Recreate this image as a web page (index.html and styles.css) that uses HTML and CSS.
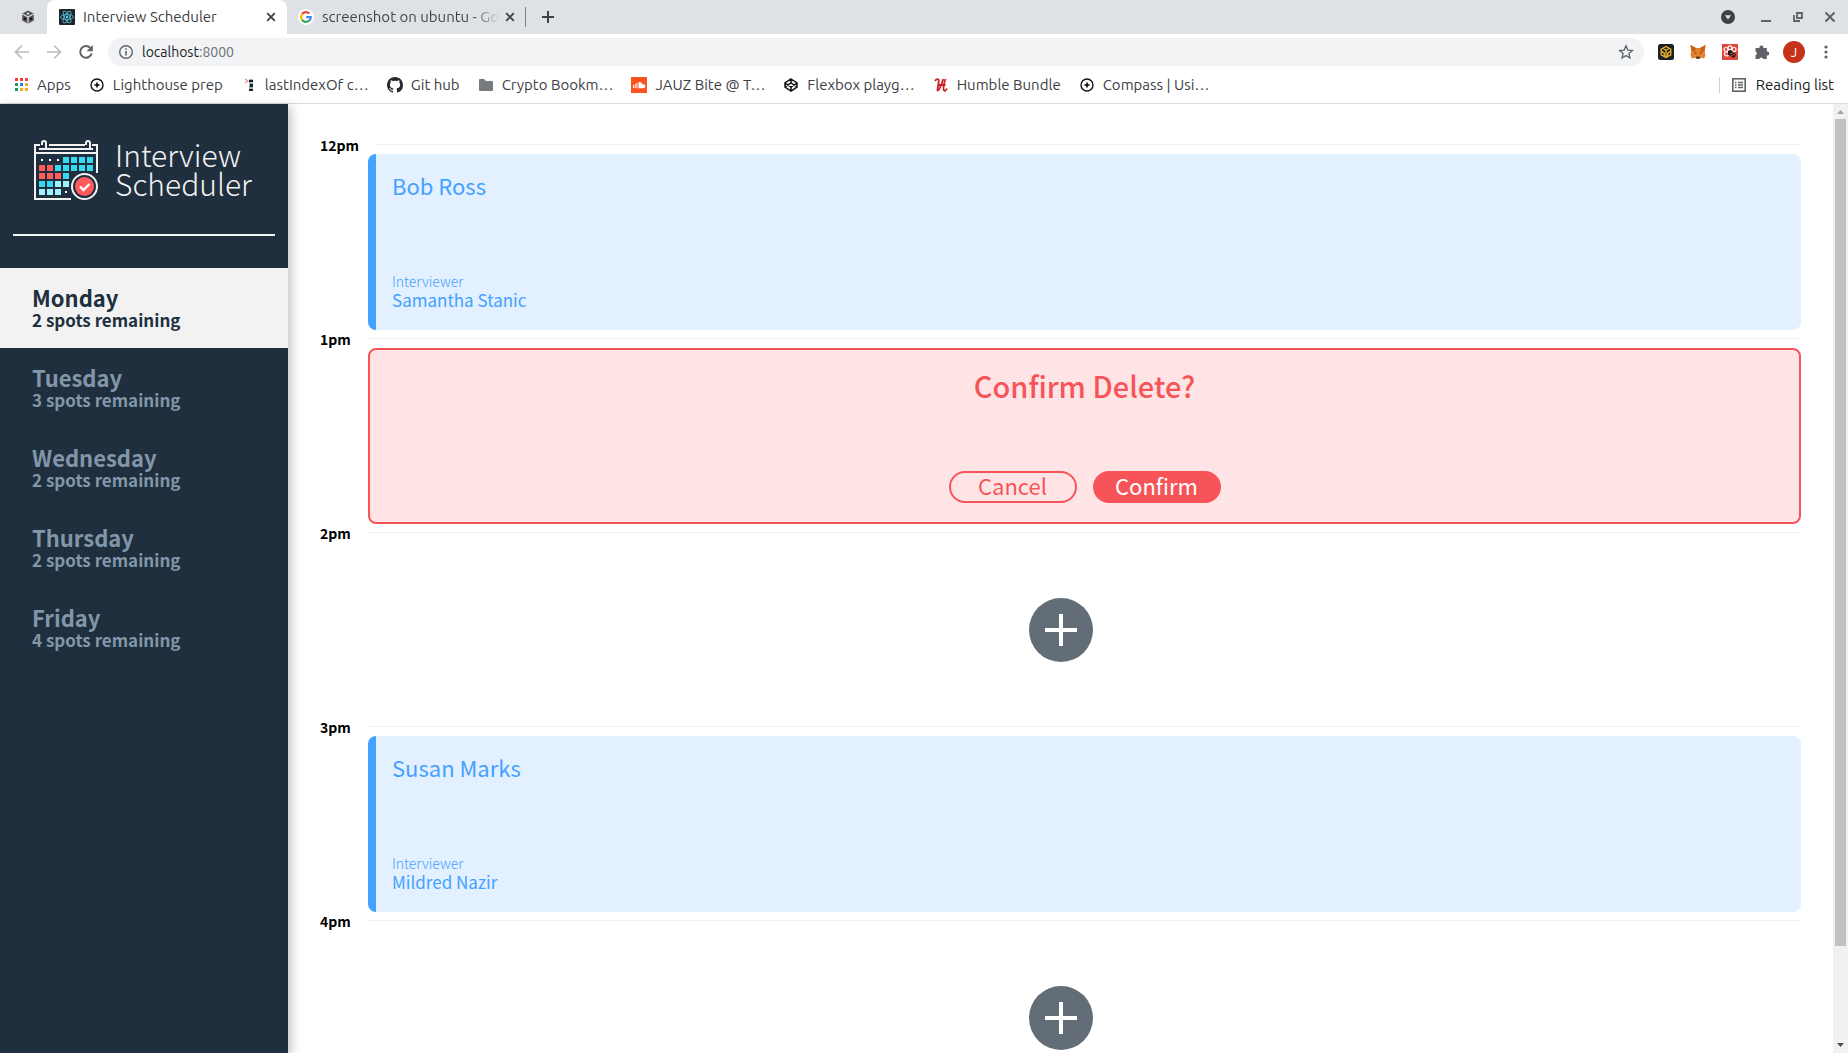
FILE: index.html
```html
<!DOCTYPE html>
<html lang="en">
<head>
<meta charset="utf-8">
<title>Interview Scheduler</title>
<link rel="stylesheet" href="styles.css">
</head>
<body>
<svg class="defs" aria-hidden="true">
  <symbol id="i-close" viewBox="0 0 16 16"><path d="M4.200 4.200l7.600 7.600M11.800 4.200l-7.600 7.600" stroke="#3c4043" stroke-width="1.800"/></symbol>
  <symbol id="i-compass" viewBox="0 0 16 16"><circle cx="8" cy="8" r="6" fill="none" stroke="#111" stroke-width="1.400"/><path d="M8 4.500l1 2.500 2.500 1L9 9l-1 2.500L7 9 4.500 8 7 7z" fill="#111"/></symbol>
</svg>

<header class="browser">
  <div class="tabs">
    <div class="pinned">
      <svg class="icon" viewBox="0 0 16 16"><path d="M8 1.500l5.800 3v7L8 14.800l-5.800-3.300v-7z" fill="#555"/><path d="M8 8v6.500M8 8L2.500 5M8 8l5.500-3" stroke="#ddd" stroke-width="1.200"/><circle cx="8" cy="4.600" r="1.200" fill="#ddd"/><circle cx="5" cy="9.800" r="1.200" fill="#111"/><circle cx="11" cy="9.800" r="1.200" fill="#111"/></svg>
    </div>
    <div class="tab tab--active">
      <svg class="icon" viewBox="0 0 16 16"><rect width="16" height="16" rx="1" fill="#20232a"/><g fill="none" stroke="#4fb8d2" stroke-width=".9"><ellipse cx="8" cy="8" rx="6.500" ry="2.500"/><ellipse cx="8" cy="8" rx="6.500" ry="2.500" transform="rotate(60 8 8)"/><ellipse cx="8" cy="8" rx="6.500" ry="2.500" transform="rotate(120 8 8)"/></g><circle cx="8" cy="8" r="1.200" fill="#61dafb"/></svg>
      <span class="tab__title">Interview Scheduler</span>
      <button class="icon-button" aria-label="Close tab"><svg class="icon"><use href="#i-close"/></svg></button>
    </div>
    <div class="tab tab--second">
      <svg class="icon" viewBox="0 0 16 16"><circle cx="8" cy="8" r="8" fill="#fff"/><g fill="none" stroke-width="2.200"><path d="M4 5.200A4.900 4.900 0 0 1 11.400 4.500" stroke="#ea4335"/><path d="M4 5.200a4.900 4.900 0 0 0 0 5.600" stroke="#fbbc05"/><path d="M4 10.800a4.900 4.900 0 0 0 7.200.9" stroke="#34a853"/><path d="M11.200 11.700A4.900 4.900 0 0 0 12.800 8.200H8.200" stroke="#4285f4"/></g></svg>
      <span class="tab__title tab__title--fade">screenshot on ubuntu - Go</span>
      <button class="icon-button" aria-label="Close tab"><svg class="icon"><use href="#i-close"/></svg></button>
    </div>
    <button class="icon-button new-tab" aria-label="New tab"><svg class="icon" viewBox="0 0 16 16"><path d="M8 2v12M2 8h12" stroke="#3c4043" stroke-width="2"/></svg></button>
    <div class="window-controls">
      <button class="icon-button" aria-label="Search tabs"><svg class="icon" viewBox="0 0 16 16"><circle cx="8" cy="8" r="7" fill="#3c4043"/><path d="M4.800 6.200h6.400L8 10.400z" fill="#dee1e6"/></svg></button>
      <button class="icon-button" aria-label="Minimize"><svg class="icon" viewBox="0 0 16 16"><path d="M3 12h10" stroke="#5f6368" stroke-width="2"/></svg></button>
      <button class="icon-button" aria-label="Restore"><svg class="icon" viewBox="0 0 16 16"><path d="M7 4h5v5H7zM4 6v6h6" fill="none" stroke="#5f6368" stroke-width="1.800"/></svg></button>
      <button class="icon-button" aria-label="Close window"><svg class="icon" viewBox="0 0 16 16"><path d="M3.500 3.500l9 9M12.500 3.500l-9 9" stroke="#5f6368" stroke-width="2"/></svg></button>
    </div>
  </div>

  <div class="toolbar">
    <button class="icon-button" aria-label="Back"><svg class="icon" viewBox="0 0 16 16"><path d="M15 8H2M8 1.500L1.500 8 8 14.500" fill="none" stroke="#babcbe" stroke-width="1.700"/></svg></button>
    <button class="icon-button" aria-label="Forward"><svg class="icon" viewBox="0 0 16 16"><path d="M1 8h13M8 1.500L14.500 8 8 14.500" fill="none" stroke="#babcbe" stroke-width="1.700"/></svg></button>
    <button class="icon-button" aria-label="Reload"><svg class="icon" viewBox="0 0 16 16"><path d="M13.600 9.500A5.800 5.800 0 1 1 12.300 4" fill="none" stroke="#5f6368" stroke-width="2"/><path d="M14.800 1v6.200H8.600z" fill="#5f6368"/></svg></button>
    <div class="omnibox">
      <svg class="icon" viewBox="0 0 16 16"><circle cx="8" cy="8" r="6.300" fill="none" stroke="#5f6368" stroke-width="1.400"/><path d="M8 7v4.500M8 4.200v1.600" stroke="#5f6368" stroke-width="1.600"/></svg>
      <span class="omnibox__url">localhost<span class="omnibox__port">:8000</span></span>
      <button class="icon-button" aria-label="Bookmark this page"><svg class="icon" viewBox="0 0 16 16"><path d="M8 1.800l1.800 4.300 4.600.4-3.500 3 1.100 4.500L8 11.600 4 14l1.100-4.500-3.500-3 4.600-.4z" fill="none" stroke="#5f6368" stroke-width="1.300"/></svg></button>
    </div>
    <button class="icon-button" aria-label="Wallet extension"><svg class="icon" viewBox="0 0 16 16"><rect width="16" height="16" rx="2.500" fill="#1b1f26"/><path d="M8 2.500l4.800 2.700v5.600L8 13.500l-4.800-2.700V5.200zM5 4.300l3 1.900 3-1.900M3.500 7.300l2.800 1.900v3M12.500 7.300L9.700 9.200v3M8 6.200v7" fill="none" stroke="#f0b429" stroke-width="1.300"/></svg></button>
    <button class="icon-button" aria-label="Fox extension"><svg class="icon" viewBox="0 0 16 16"><path d="M.5 1l5.500 3h4l5.500-3-.9 6 .9 4-1.300 3.500-3.400-.8L9.500 15h-3l-1.300-1.300-3.400.8L.5 11l.9-4z" fill="#e8812d"/><path d="M.5 1L6 4 4.500 8 1.400 7zM15.500 1L10 4l1.500 4 3.100-1z" fill="#cd6116"/><path d="M4 8l2.500 1-.6 1zM12 8l-2.500 1 .6 1z" fill="#40352d"/><path d="M6.500 12.500h3l.5 2H6z" fill="#333"/></svg></button>
    <button class="icon-button" aria-label="Flower extension"><svg class="icon" viewBox="0 0 16 16"><rect width="16" height="16" fill="#e0483e"/><g fill="none" stroke="#fff" stroke-width="1.200"><circle cx="8" cy="3.800" r="2"/><circle cx="4" cy="5.500" r="2"/><circle cx="12" cy="5.500" r="2"/><circle cx="4.500" cy="10" r="2"/></g><path d="M6 7l3-1 2 2 3 2-1 3-2 1-2-2-3-1z" fill="#1b1b1b"/><path d="M8 10l4-2M9 12l4-2" stroke="#e0483e"/></svg></button>
    <button class="icon-button" aria-label="Extensions"><svg class="icon" viewBox="0 0 16 16"><path d="M1.500 4h4a2 2 0 1 1 3.800 0h3.500v3.600a2 2 0 1 1 0 3.900V15H9.200a2 2 0 0 0-3.900 0H1.500v-3.700a2 2 0 0 0 0-3.800z" fill="#5f6368"/></svg></button>
    <button class="avatar" aria-label="Profile">J</button>
    <button class="icon-button" aria-label="Menu"><svg class="icon" viewBox="0 0 16 16"><g fill="#5f6368"><circle cx="8" cy="3" r="1.600"/><circle cx="8" cy="8" r="1.600"/><circle cx="8" cy="13" r="1.600"/></g></svg></button>
  </div>

  <nav class="bookmarks" aria-label="Bookmarks">
    <a href="#"><svg class="icon" viewBox="0 0 16 16"><path d="M2 1h3v3H2zM7 1h3v3H7zM12 1h3v3h-3z" fill="#ea4335"/><path d="M2 6h3v3H2zM2 11h3v3H2z" fill="#1a9f57"/><path d="M7 6h3v3H7z" fill="#1a83f4"/><path d="M12 6h3v3h-3zM7 11h3v3H7zM12 11h3v3h-3z" fill="#fba922"/></svg>Apps</a>
    <a href="#"><svg class="icon"><use href="#i-compass"/></svg>Lighthouse prep</a>
    <a href="#"><svg class="icon" viewBox="0 0 16 16"><path d="M4 2l3 2-3 2" fill="none" stroke="#f78a8a" stroke-width="1.200"/><path d="M8 2h4v12H8z" fill="#9fb4bb"/><path d="M8 3h4v2H8zM9 7h3v3H9zM8 12h4v2H8z" fill="#1b1f26"/></svg>lastIndexOf c…</a>
    <a href="#"><svg class="icon" viewBox="0 0 16 16"><path fill="#24292f" d="M8 0C3.580 0 0 3.580 0 8c0 3.540 2.290 6.530 5.470 7.590.4.070.55-.17.55-.38 0-.19-.01-.82-.01-1.490-2.010.37-2.530-.49-2.690-.94-.09-.23-.48-.94-.82-1.130-.28-.15-.68-.52-.01-.53.63-.01 1.080.58 1.230.82.72 1.210 1.870.87 2.330.66.070-.52.28-.87.51-1.070-1.780-.2-3.640-.89-3.640-3.950 0-.87.31-1.590.82-2.150-.08-.2-.36-1.020.080-2.120 0 0 .67-.21 2.200.82.64-.18 1.320-.27 2-.27s1.360.090 2 .27c1.530-1.040 2.200-.82 2.200-.82.44 1.100.16 1.920.080 2.120.51.56.82 1.270.82 2.150 0 3.070-1.870 3.750-3.650 3.950.29.25.54.73.54 1.480 0 1.070-.01 1.930-.01 2.200 0 .21.15.46.55.38A8.010 8.010 0 0 0 16 8c0-4.420-3.580-8-8-8z"/></svg>Git hub</a>
    <a href="#"><svg class="icon" viewBox="0 0 16 16"><path d="M1 3a1 1 0 0 1 1-1h4l2 2h6a1 1 0 0 1 1 1v8a1 1 0 0 1-1 1H2a1 1 0 0 1-1-1z" fill="#777b7f"/></svg>Crypto Bookm…</a>
    <a href="#"><svg class="icon" viewBox="0 0 16 16"><rect width="16" height="16" fill="#fb5320"/><path d="M7.500 5.200a3 3 0 0 1 4 2.200 2 2 0 1 1 .6 3.800H7.500z" fill="#fff"/><path d="M2.500 8v3M4.200 7v4.200M5.900 6v5.200" stroke="#fff"/></svg>JAUZ Bite @ T…</a>
    <a href="#"><svg class="icon" viewBox="0 0 16 16"><path d="M8 2l6 4v4l-6 4-6-4V6zM2 6l6 4 6-4M2 10l6-4 6 4M8 2v4M8 10v4" fill="none" stroke="#111" stroke-width="1.500"/></svg>Flexbox playg…</a>
    <a href="#"><svg class="icon" viewBox="0 0 16 16"><path d="M2 4C3.500 1.500 6 1.500 5.800 4L4.300 14M4.300 13.500c2.500.5 3.700-6 6-11.500M4.500 8h8M12.500 2c-1.500 4-2.300 8-1.800 11 .5 1.500 2.500.5 3.300-1.500" fill="none" stroke="#cb2229" stroke-width="1.800"/></svg>Humble Bundle</a>
    <a href="#"><svg class="icon"><use href="#i-compass"/></svg>Compass | Usi…</a>
    <a class="reading-list" href="#"><svg class="icon" viewBox="0 0 16 16"><rect x="1.800" y="1.800" width="12.400" height="12.400" fill="none" stroke="#5f6368" stroke-width="1.600"/><path d="M4 5.500h1.500M7 5.500h5M4 8h1.500M7 8h5M4 10.500h1.500M7 10.500h5" stroke="#5f6368" stroke-width="1.400"/></svg>Reading list</a>
  </nav>
</header>

<div class="page">
  <section class="sidebar">
    <div class="brand">
      <svg class="brand__logo" viewBox="0 0 76 72" aria-hidden="true">
        <g fill="none" stroke="#f2f2f2" stroke-width="2">
          <path d="M12 11H7v54h36M21 11h36M64 11h5v28M11 15h54M6 19h64"/>
          <path d="M14 11V9a2 2 0 0 1 4 0v6M58 11V9a2 2 0 0 1 4 0v6"/>
          <circle cx="56.500" cy="52.500" r="12.500"/>
        </g>
        <path d="M13 25h2v2h-2zM21 25h2v2h-2zM29 25h2v2h-2zM37 57h2v2h-2z" fill="#fff"/>
        <path d="M35 23h6v6h-6zM43 23h6v6h-6zM51 23h6v6h-6zM59 23h6v6h-6zM27 31h6v6h-6zM35 31h6v6h-6zM43 31h6v6h-6zM51 31h6v6h-6zM59 31h6v6h-6zM35 39h6v6h-6zM11 47h6v6h-6zM19 47h6v6h-6z" fill="#37d9f1"/>
        <path d="M11 31h6v6h-6zM19 31h6v6h-6zM11 39h6v6h-6zM19 39h6v6h-6zM27 39h6v6h-6z" fill="#ff5b5d"/>
        <path d="M27 47h6v6h-6zM35 47h6v6h-6zM11 55h6v6h-6zM19 55h6v6h-6zM27 55h6v6h-6z" fill="#9ff1fd"/>
        <circle cx="56.500" cy="52.500" r="9.500" fill="#ff5b5d"/>
        <path d="M52 52.500l3.500 3.500 6-6" fill="none" stroke="#fff" stroke-width="2.400"/>
      </svg>
      <h1 class="brand__name">Interview<br>Scheduler</h1>
    </div>
    <hr class="separator">
    <nav>
      <ul class="days">
        <li><a class="day day--selected" href="#"><span class="day__name">Monday</span><span class="day__spots">2 spots remaining</span></a></li>
        <li><a class="day" href="#"><span class="day__name">Tuesday</span><span class="day__spots">3 spots remaining</span></a></li>
        <li><a class="day" href="#"><span class="day__name">Wednesday</span><span class="day__spots">2 spots remaining</span></a></li>
        <li><a class="day" href="#"><span class="day__name">Thursday</span><span class="day__spots">2 spots remaining</span></a></li>
        <li><a class="day" href="#"><span class="day__name">Friday</span><span class="day__spots">4 spots remaining</span></a></li>
      </ul>
    </nav>
  </section>

  <main class="schedule">
    <article class="appointment">
      <header class="appointment__time"><h4>12pm</h4></header>
      <div class="card">
        <h2 class="card__student">Bob Ross</h2>
        <div><h4 class="card__label">Interviewer</h4><h3 class="card__interviewer">Samantha Stanic</h3></div>
      </div>
    </article>
    <article class="appointment">
      <header class="appointment__time"><h4>1pm</h4></header>
      <div class="card card--confirm">
        <h2 class="card__question">Confirm Delete?</h2>
        <div class="card__actions"><button class="button">Cancel</button><button class="button button--solid">Confirm</button></div>
      </div>
    </article>
    <article class="appointment">
      <header class="appointment__time"><h4>2pm</h4></header>
      <div class="slot"><button class="add" aria-label="Add"><svg class="add__plus" viewBox="0 0 32 32"><path d="M16 0v32M0 16h32" stroke="#fff" stroke-width="4"/></svg></button></div>
    </article>
    <article class="appointment">
      <header class="appointment__time"><h4>3pm</h4></header>
      <div class="card">
        <h2 class="card__student">Susan Marks</h2>
        <div><h4 class="card__label">Interviewer</h4><h3 class="card__interviewer">Mildred Nazir</h3></div>
      </div>
    </article>
    <article class="appointment">
      <header class="appointment__time"><h4>4pm</h4></header>
      <div class="slot"><button class="add" aria-label="Add"><svg class="add__plus" viewBox="0 0 32 32"><path d="M16 0v32M0 16h32" stroke="#fff" stroke-width="4"/></svg></button></div>
    </article>
  </main>

  <div class="scrollbar" aria-hidden="true">
    <svg class="scrollbar__arrow" viewBox="0 0 15 15"><path d="M4 10h7L7.500 6z" fill="#a3a3a3"/></svg>
    <div class="scrollbar__track"><div class="scrollbar__thumb"></div></div>
    <svg class="scrollbar__arrow" viewBox="0 0 15 15"><path d="M4 5h7L7.500 9z" fill="#505050"/></svg>
  </div>
</div>
</body>
</html>
```
FILE: styles.css
```css
:root {
  --ui: Ubuntu, "Noto Sans", sans-serif;
  --body: "Noto Sans CJK JP", sans-serif;
  --navy: #202f3e;
  --blue: #43a1ff;
  --red: #f75459;
}

* { box-sizing: border-box; }

body {
  margin: 0;
  height: 100vh;
  display: flex;
  flex-direction: column;
  overflow: hidden;
  background: #fff;
  font-family: var(--body);
}

h1, h2, h3, h4, ul { margin: 0; padding: 0; }
button { border: 0; padding: 0; background: none; font: inherit; }
a { color: inherit; text-decoration: none; }

.defs { display: none; }
.icon { display: block; width: 16px; height: 16px; flex: none; }
.icon-button { flex: none; width: 16px; height: 16px; }

/* Browser frame */
.browser {
  flex: none;
  font: 15px/20px var(--ui);
  color: #3c4043;
  border-bottom: 1px solid #d8dadc;
}

.tabs { display: flex; align-items: center; height: 34px; background: #dee1e6; }
.pinned { width: 47px; padding-left: 20px; }
.tab { display: flex; align-items: center; gap: 8px; }
.tab--active { width: 240px; height: 34px; padding: 0 8px 0 12px; background: #fff; border-radius: 8px 8px 0 0; }
.tab--second { width: 239px; height: 20px; padding: 0 7px 0 11px; border-right: 1px solid #808388; }
.tab__title { flex: 1; overflow: hidden; white-space: nowrap; }
.tab__title--fade { margin-right: -6px; background: linear-gradient(90deg, #3c4043 84%, #dee1e6 100%); background-clip: text; color: transparent; }
.new-tab { margin-left: 14px; }
.window-controls { display: flex; gap: 16px; margin-left: auto; padding-right: 10px; }
.window-controls .icon-button:first-child { margin-right: 6px; }

.toolbar { display: flex; align-items: center; gap: 16px; height: 36px; padding: 0 14px; }
.omnibox { flex: 1; display: flex; align-items: center; gap: 8px; height: 28px; margin: 0 -2px; padding: 0 10px; border-radius: 14px; background: #f1f3f4; font-size: 14px; color: #202124; }
.omnibox__url { flex: 1; }
.omnibox__port { color: #6b6f73; }
.avatar { width: 22px; height: 22px; margin: 0 -3px; border-radius: 50%; background: #c5341a; color: #fff; font-size: 13px; line-height: 22px; }

.bookmarks { display: flex; align-items: center; gap: 18px; height: 33px; padding: 0 14px 4px 13px; white-space: nowrap; }
.bookmarks a { display: flex; align-items: center; gap: 8px; }
.bookmarks .reading-list { gap: 9px; margin-left: auto; padding-left: 11px; border-left: 1px solid #ccced1; height: 16px; color: #202124; }

/* Page */
.page { flex: 1; min-height: 0; display: flex; }

.sidebar {
  flex: none;
  width: 288px;
  background: var(--navy);
  box-shadow: 3px 3px 10px rgba(0, 0, 0, .25);
  z-index: 1;
}
.brand { display: flex; gap: 11px; padding: 30px 28px 0; }
.brand__logo { flex: none; width: 76px; height: 72px; }
.brand__name { padding-top: 6px; font-size: 30px; line-height: 29px; font-weight: 300; color: #f2f2f2; }
.separator { height: 2px; margin: 28px 13px 32px; border: 0; background: #f2f8f8; }

.days { list-style: none; }
.day { display: block; height: 80px; padding: 16px 32px; color: #8196a8; font-weight: 700; }
.day--selected { background: #f2f2f2; color: var(--navy); }
.day__name, .day__spots { display: block; }
.day__name { font-size: 22px; line-height: 26px; }
.day__spots { font-size: 17px; line-height: 20px; }

.schedule { flex: 1; overflow: hidden; padding: 32px; }
.appointment { display: flex; flex-direction: column; }
.appointment__time { display: flex; align-items: center; gap: 16px; font-size: 14px; line-height: 18px; color: #000; }
.appointment__time h4 { font-weight: 700; }
.appointment__time::after { content: ""; flex: 1; height: 1px; margin-bottom: 2px; background: #f0f0f0; }

.card {
  display: flex;
  flex-direction: column;
  justify-content: space-between;
  height: 176px;
  margin-left: 48px;
  padding: 18px 24px 20px 16px;
  border-left: 8px solid var(--blue);
  border-radius: 8px;
  background: #e3f0ff;
  color: var(--blue);
}
.card__student { font-size: 22px; line-height: 26px; font-weight: 400; }
.card__label { font-size: 14px; line-height: 18px; font-weight: 300; }
.card__interviewer { font-size: 17px; line-height: 20px; font-weight: 400; }

.card--confirm { align-items: center; padding: 18px 16px 19px; border: 2px solid var(--red); background: #ffe4e5; color: var(--red); }
.card__question { font-size: 29px; line-height: 34px; font-weight: 500; }
.card__actions { display: flex; gap: 16px; }
.button { width: 128px; height: 32px; padding-bottom: 4px; border: 2px solid var(--red); border-radius: 16px; color: var(--red); font-size: 22px; line-height: 24px; }
.button--solid { background: var(--red); color: #fff; }

.slot { display: flex; align-items: center; justify-content: center; height: 176px; }
.add { display: flex; align-items: center; justify-content: center; width: 64px; height: 64px; border-radius: 50%; background: #626d77; }
.add__plus { width: 32px; height: 32px; }

.scrollbar { flex: none; display: flex; flex-direction: column; width: 15px; background: #f1f1f1; }
.scrollbar__arrow { flex: none; width: 15px; height: 15px; }
.scrollbar__track { flex: 1; padding: 0 2px; }
.scrollbar__thumb { height: 90%; background: #c1c1c1; }
```
